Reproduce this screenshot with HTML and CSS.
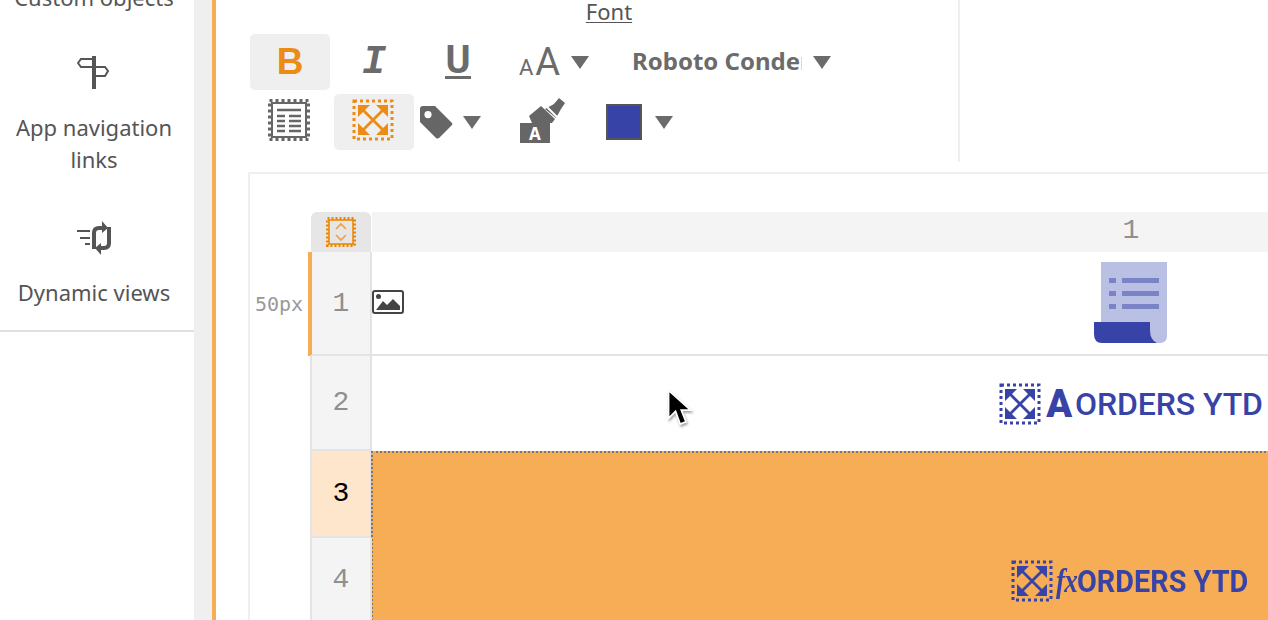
FILE: index.html
```html
<!DOCTYPE html>
<html lang="en">
<head>
  <meta charset="UTF-8">
  <title>Table editor</title>
  <link rel="stylesheet" href="styles.css">
</head>
<body>
  <svg class="defs" width="0" height="0">
    <symbol id="expand" viewBox="0 0 42 42">
      <rect x="2" y="2" width="38" height="38" fill="none" stroke="currentColor" stroke-width="3" stroke-dasharray="3 3"/>
      <path d="M9 9L33 33M33 9L9 33" stroke="currentColor" stroke-width="2.800"/>
      <path d="M6 6H18L6 18zM36 6V18L24 6zM36 36H24L36 24zM6 36V24L18 36z" fill="currentColor"/>
    </symbol>
  </svg>

  <aside class="sidebar">
    <div class="side-item side-item-cut">Custom objects</div>
    <div class="side-item">
      <svg class="side-icon" viewBox="0 0 34 34" fill="none" stroke="#555" stroke-width="2">
        <path d="M16 3H4L1 7L4 11H16"/>
        <path d="M18 11H28L31 15L28 20H18"/>
        <path d="M17 0V33" stroke-width="4"/>
      </svg>
      App navigation<br>links
    </div>
    <div class="side-item">
      <svg class="side-icon" viewBox="0 0 34 34" fill="none" stroke="#555">
        <path d="M0 10H13M3 17H13M8 23H13" stroke-width="2"/>
        <path d="M17 28V12Q17 7 22 7H25M32 6V22Q32 27 27 27H24" stroke-width="4"/>
        <path d="M25 0L31 7L25 12zM24 22L18 27L24 34z" fill="#555" stroke="none"/>
      </svg>
      Dynamic views
    </div>
  </aside>
  <div class="gutter"></div>

  <main class="main">
    <section class="toolbar">
      <h2 class="toolbar-title">Font</h2>
      <div class="tool-row">
        <button class="tool tool-on glyph-b">B</button>
        <button class="tool glyph-i">I</button>
        <button class="tool glyph-u"><span>U</span></button>
        <span class="size-glyph"><small>A</small>A</span>
        <i class="caret caret-size"></i>
        <span class="font-name">Roboto Condensed</span>
        <i class="caret caret-font"></i>
      </div>
      <div class="tool-row">
        <button class="tool">
          <svg class="tool-icon" width="42" height="42" viewBox="0 0 42 42" fill="none" stroke="#666">
            <rect x="1.500" y="1.500" width="39" height="39" stroke-width="3" stroke-dasharray="3 3"/>
            <rect x="4" y="4" width="34" height="34" stroke-width="2"/>
            <path d="M9 11H33M9 17H17M21 17H33M9 22H17M21 22H33M9 27H17M21 27H33M9 32H17M21 32H33" stroke-width="2.600"/>
          </svg>
        </button>
        <button class="tool tool-on tool-orange">
          <svg class="tool-icon" width="42" height="42"><use href="#expand"/></svg>
        </button>
        <svg class="tag-icon" width="33" height="33" viewBox="0 0 33 33">
          <path fill-rule="evenodd" fill="#666" d="M3 0H15L32 17Q33 18 32 19L19 32Q17 33 16 32L0 16V3Q0 0 3 0zM8 5A3.600 3.600 0 1 0 8 12.200A3.600 3.600 0 1 0 8 5z"/>
        </svg>
        <i class="caret caret-tag"></i>
        <svg class="brush-icon" width="46" height="46" viewBox="0 0 46 46">
          <path fill="#666" d="M9 18L21 8L35 21L32 25H12z"/>
          <path fill="#666" d="M25 11L34 6L39 0L45 5L41 11L36 20z"/>
          <path stroke="#fff" stroke-width="2" d="M24 6L38 20"/>
          <rect y="25" width="30" height="20" fill="#666"/>
          <text x="15" y="42" class="brush-a">A</text>
        </svg>
        <span class="swatch"></span>
        <i class="caret caret-swatch"></i>
      </div>
    </section>

    <section class="editor">
      <div class="sheet">
        <div class="corner">
          <svg width="30" height="30" viewBox="0 0 30 30" fill="none" stroke="#ec8500">
            <rect x="1.500" y="1.500" width="27" height="27" stroke-width="3" stroke-dasharray="2 2"/>
            <rect x="3" y="3" width="24" height="24" stroke-width="1.500"/>
            <path d="M10 12L15 7L20 12M10 18L15 23L20 18" stroke-width="1.600" stroke="#f0a040"/>
          </svg>
        </div>
        <div class="col-head">1</div>

        <div class="size-label">50px</div>
        <div class="row-num row-num-picked row-a">1</div>
        <div class="cell cell-first row-a">
          <svg class="image-icon" width="32" height="24" viewBox="0 0 32 24">
            <rect x="1" y="1" width="30" height="22" rx="2" fill="#fff" stroke="#444" stroke-width="2"/>
            <circle cx="6.500" cy="6.500" r="2.500" fill="#444"/>
            <path fill="#444" d="M4 20L11 11L15 15L21 9L28 16V20z"/>
          </svg>
          <svg class="doc-icon" width="74" height="82" viewBox="0 0 74 82">
            <path fill="#b9c0e3" d="M7 0H73V74Q73 81 66 81H7z"/>
            <path fill="#7a83c6" d="M15 16H22V21H15zM28 16H65V21H28zM15 29H22V34H15zM28 29H65V34H28zM15 42H22V47H15zM28 42H65V47H28z"/>
            <path fill="#3843a8" d="M0 60H56V68Q56 78 63 81H8Q0 81 0 72z"/>
          </svg>
        </div>

        <div class="row-num row-b">2</div>
        <div class="cell row-b">
          <div class="measure">
            <svg class="measure-icon" width="42" height="42"><use href="#expand"/></svg>
            <span class="measure-a">A</span>
            <span class="measure-text">ORDERS YTD</span>
          </div>
        </div>

        <div class="row-num row-num-active row-c">3</div>
        <div class="cell cell-merged">
          <div class="measure">
            <svg class="measure-icon" width="42" height="42"><use href="#expand"/></svg>
            <span class="measure-fx">fx</span>
            <span class="measure-narrow">ORDERS YTD</span>
          </div>
        </div>

        <div class="row-num row-d">4</div>
      </div>
    </section>
  </main>

  <svg class="pointer" width="28" height="44" viewBox="0 0 24 38">
    <path d="M3 3V27L9 21L13 32L18 30L14 20H22z" fill="#000" stroke="#fff" stroke-width="1.500"/>
  </svg>
</body>
</html>
```

FILE: styles.css
```css
/* page frame */
body {
  margin: 0;
  width: 1268px;
  height: 620px;
  overflow: hidden;
  display: flex;
  font-family: "Noto Sans", sans-serif;
  background: #fff;
  color: #555;
}
.defs {
  display: none;
}

/* left list of objects */
.sidebar {
  flex: none;
  width: 188px;
  height: 330px;
  margin-top: -19px;
  padding: 0 6px 19px 0;
  border-bottom: 2px solid #e0e0e0;
  overflow: hidden;
  font-size: 22px;
  line-height: 32px;
  text-align: center;
}
.side-item {
  padding-bottom: 46px;
}
.side-item-cut {
  padding-bottom: 43px;
}
.side-icon {
  display: block;
  width: 34px;
  height: 34px;
  margin: 0 auto 21px;
}
.gutter {
  flex: none;
  width: 18px;
  background: #efefef;
}

/* main area */
.main {
  flex: none;
  width: 1052px;
  border-left: 4px solid #f7ad55;
  overflow: hidden;
}

/* toolbar */
.toolbar {
  width: 708px;
  height: 162px;
  padding-left: 34px;
  border-right: 2px solid #efefef;
}
.toolbar-title {
  margin: 0;
  height: 34px;
  padding-left: 10px;
  font-size: 22px;
  font-weight: normal;
  line-height: 22px;
  text-align: center;
  color: #555;
  text-decoration: underline;
  text-decoration-thickness: 1px;
  text-underline-offset: 2px;
}
.tool-row {
  display: flex;
  align-items: center;
  height: 56px;
  margin-bottom: 4px;
}
.tool {
  flex: none;
  display: flex;
  align-items: center;
  justify-content: center;
  width: 80px;
  height: 56px;
  margin-right: 4px;
  padding: 0;
  border: 0;
  border-radius: 5px;
  background: none;
  color: #6b6b6b;
}
.tool-on {
  background: #efefef;
}
.tool-orange {
  color: #ec8c17;
}
.tool-icon {
  margin: 0 2px 5px 0;
}
.glyph-b {
  font: bold 37px "Liberation Sans", sans-serif;
  color: #ec8c17;
}
.glyph-i {
  font: italic bold 40px "Liberation Mono", monospace;
}
.glyph-u {
  font: bold 38px "Roboto", sans-serif;
}
.glyph-u span {
  line-height: 31px;
  border-bottom: 3px solid #6b6b6b;
}
.size-glyph {
  margin-left: 17px;
  width: 38px;
  font: 38px "Roboto", sans-serif;
  color: #6b6b6b;
  white-space: nowrap;
}
.size-glyph small {
  font-size: 22px;
  margin-right: 2px;
}
.caret {
  flex: none;
  width: 0;
  height: 0;
  border-top: 13px solid #6b6b6b;
  border-left: 9px solid transparent;
  border-right: 9px solid transparent;
}
.caret-size {
  margin-left: 14px;
}
.font-name {
  flex: none;
  width: 170px;
  margin-left: 43px;
  padding-bottom: 3px;
  overflow: hidden;
  white-space: nowrap;
  font-size: 24px;
  font-weight: bold;
  color: #6b6b6b;
}
.caret-font {
  margin-left: 11px;
}
.tag-icon {
  margin-left: 2px;
}
.caret-tag {
  margin-left: 10px;
}
.brush-icon {
  margin: 0 0 3px 39px;
}
.brush-a {
  font: bold 17px "Noto Sans", sans-serif;
  fill: #fff;
  text-anchor: middle;
}
.swatch {
  flex: none;
  width: 32px;
  height: 32px;
  margin-left: 40px;
  background: #3843a8;
  border: 2px solid #555;
}
.caret-swatch {
  margin-left: 13px;
}

/* grid editor */
.editor {
  margin: 10px 0 0 32px;
  padding-top: 38px;
  border-top: 2px solid #efefef;
  border-left: 2px solid #efefef;
}
.sheet {
  display: grid;
  grid-template-columns: 60px 62px 1518px;
  grid-template-rows: 40px 104px 95px 87px 85px 86px;
}
.corner {
  grid-column: 2;
  display: flex;
  align-items: center;
  justify-content: center;
  margin: 0 1px;
  background: #e6e6e6;
  border-radius: 6px 6px 0 0;
}
.col-head {
  font: 28px/38px "Liberation Mono", monospace;
  text-align: center;
  color: #8f8f8f;
  background: #f4f4f4;
}
.size-label {
  grid-column: 1;
  grid-row: 2;
  padding: 0 6px 0 5px;
  font: 20px/104px "DejaVu Sans Mono", monospace;
  color: #999;
}
.row-num {
  grid-column: 2;
  display: flex;
  align-items: center;
  justify-content: center;
  box-sizing: border-box;
  font: 28px "Liberation Mono", monospace;
  color: #8f8f8f;
  background: #f4f4f4;
  border: solid #e3e3e3;
  border-width: 0 2px 2px;
}
.row-num-picked {
  border-left-color: #f7ad55;
  box-shadow: -2px 0 0 #f7ad55;
}
.row-num-active {
  color: #000;
  background: #fee6cd;
}
.row-a { grid-row: 2; }
.row-b { grid-row: 3; }
.row-c { grid-row: 4; }
.row-d { grid-row: 5; }
.cell {
  grid-column: 3;
  display: flex;
  align-items: center;
  justify-content: center;
  box-sizing: border-box;
  border-bottom: 2px solid #e3e3e3;
}
.row-b.cell {
  border-bottom: 0;
}
.cell-first {
  position: relative;
}
.image-icon {
  position: absolute;
  left: 0;
  top: 38px;
}
.cell-merged {
  grid-row: 4 / 7;
  margin-left: -1px;
  padding-right: 3px;
  border: 0;
  border-top: 2px dotted #777;
  border-left: 2px dotted #777;
  background: #f7ad55;
}
.measure {
  display: flex;
  align-items: center;
  color: #3843a8;
}
.measure-icon {
  margin-right: 5px;
}
.measure-a {
  font: 900 38px "Roboto", sans-serif;
  margin-right: 3px;
}
.measure-fx {
  width: 21px;
  margin-left: -2px;
  font: italic bold 34px "Liberation Serif", serif;
  letter-spacing: -1px;
  transform: scaleX(.8);
  transform-origin: 0 50%;
}
.measure-text {
  font: 500 32px "Roboto", sans-serif;
  letter-spacing: -0.1px;
}
.measure-narrow {
  width: 173px;
  white-space: nowrap;
  font: bold 32px "Roboto", sans-serif;
  transform: scaleX(.9);
  transform-origin: 0 50%;
}

/* mouse pointer over the grid */
.pointer {
  position: absolute;
  left: 665px;
  top: 387px;
  filter: drop-shadow(1px 2px 1px rgba(0, 0, 0, .35));
}
```
